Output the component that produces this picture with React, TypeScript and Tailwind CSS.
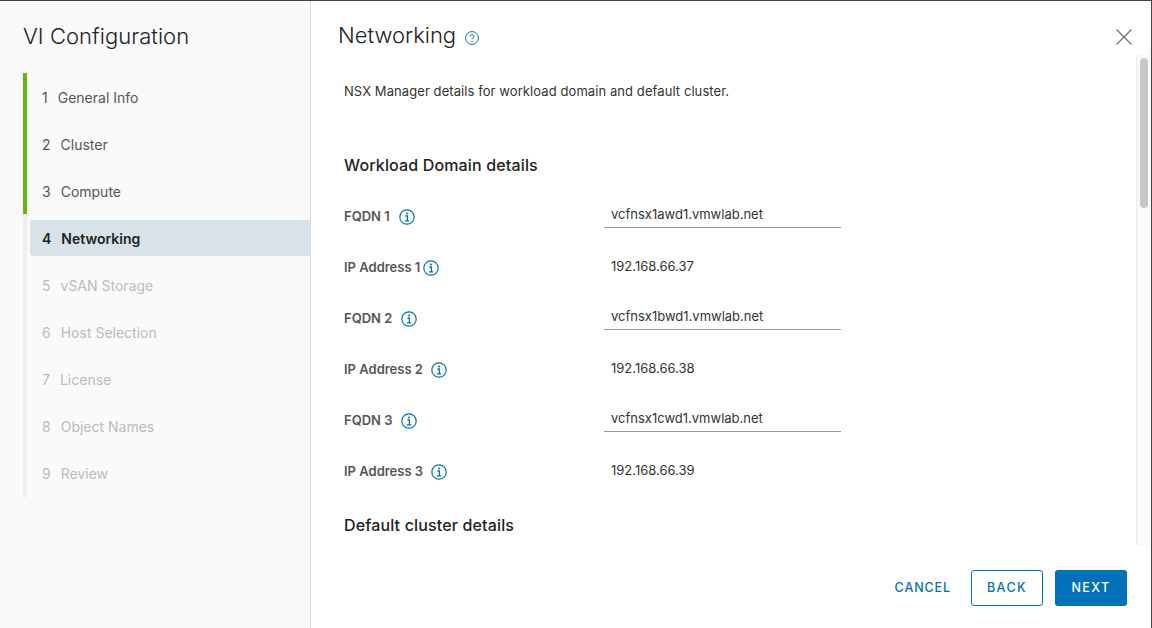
import { X } from "lucide-react";

const STEPS = [
  { n: 1, label: "General Info", state: "done" },
  { n: 2, label: "Cluster", state: "done" },
  { n: 3, label: "Compute", state: "done" },
  { n: 4, label: "Networking", state: "active" },
  { n: 5, label: "vSAN Storage", state: "todo" },
  { n: 6, label: "Host Selection", state: "todo" },
  { n: 7, label: "License", state: "todo" },
  { n: 8, label: "Object Names", state: "todo" },
  { n: 9, label: "Review", state: "todo" },
];

const ROWS = [
  { label: "FQDN 1", value: "vcfnsx1awd1.vmwlab.net", input: true, gap: "ml-[9px]" },
  { label: "IP Address 1", value: "192.168.66.37", input: false, gap: "ml-[3px]" },
  { label: "FQDN 2", value: "vcfnsx1bwd1.vmwlab.net", input: true, gap: "ml-[9px]" },
  { label: "IP Address 2", value: "192.168.66.38", input: false, gap: "ml-[8px]" },
  { label: "FQDN 3", value: "vcfnsx1cwd1.vmwlab.net", input: true, gap: "ml-[8px]" },
  { label: "IP Address 3", value: "192.168.66.39", input: false, gap: "ml-[8px]" },
];

function InfoIcon({ className }: { className?: string }) {
  return (
    <svg viewBox="0 0 16 16" className={`h-4 w-4 shrink-0 ${className ?? ""}`} fill="none">
      <circle cx="8" cy="8" r="7.2" stroke="#0072b8" strokeWidth="1.2" />
      <circle cx="8" cy="4.6" r="1" fill="#0072b8" />
      <path d="M6.4 7h2v4.6M6 11.8h4.2" stroke="#0072b8" strokeWidth="1.3" />
    </svg>
  );
}

function HelpIcon() {
  return (
    <svg viewBox="0 0 14 14" className="ml-[9px] mt-[4px] h-[14px] w-[14px]" fill="none">
      <circle cx="7" cy="7" r="6.4" stroke="#0072b8" strokeWidth="1" />
      <path d="M5 5.4c0-1.2.9-1.9 2-1.9s2 .7 2 1.8c0 1.5-2 1.5-2 3" stroke="#0072b8" strokeWidth="1" />
      <circle cx="7" cy="10.3" r=".7" fill="#0072b8" />
    </svg>
  );
}

export default function App() {
  return (
    <div className="flex h-[628px] w-[1152px] overflow-hidden border-r border-t border-[#444] bg-white font-['Inter',sans-serif] text-[13px]">
      {/* Steps */}
      <aside className="w-[311px] shrink-0 border-r border-[#dcdcdc] bg-[#fafafa] pl-[23px] pt-[18px]">
        <h1 className="text-[22px] font-light leading-[35px] text-[#222] tracking-[0.05px]">VI Configuration</h1>
        <ol className="mt-[19px]">
          {STEPS.map((s) => (
            <li
              key={s.n}
              className={`h-[47px] border-l-4 py-[6px] pl-[3px] last:h-[48px] ${
                s.state === "done" ? "border-[#60b515]" : "border-[#eeeeee]"
              }`}
            >
              <div
                className={`flex h-[36px] items-center rounded-l-[3px] pl-[12px] text-[14px] ${
                  s.state === "active"
                    ? "bg-[#d8e3e9] font-semibold text-[#222]"
                    : s.state === "done"
                      ? "text-[#565656]"
                      : "text-[#bcbcbc]"
                }`}
              >
                <span className="mr-[10px]">{s.n}</span>
                <span>{s.label}</span>
              </div>
            </li>
          ))}
        </ol>
      </aside>

      {/* Main panel */}
      <main className="flex min-w-0 flex-1 flex-col">
        <header className="flex h-[54px] shrink-0 items-start pl-[27px] pr-[13px] pt-[17px]">
          <h2 className="text-[22px] font-light leading-[35px] text-[#222]">Networking</h2>
          <div className="flex h-[35px] items-center">
            <HelpIcon />
          </div>
          <button className="ml-auto mt-[5px] text-[#6f6f6f]">
            <X className="h-[28px] w-[28px]" strokeWidth={1.1} />
          </button>
        </header>

        <div className="flex h-[491px] shrink-0">
          <div className="min-w-0 flex-1 overflow-hidden pl-[33px]">
            <p className="mt-[26px] leading-[20px] tracking-[0.08px] text-[#333]">
              NSX Manager details for workload domain and default cluster.
            </p>
            <h3 className="mt-[54px] text-[16px] font-medium leading-[20px] tracking-[0.15px] text-[#222]">
              Workload Domain details
            </h3>
            <div className="mt-[16px]">
              {ROWS.map((r) => (
                <div key={r.label} className="flex h-[51px] items-center">
                  <div className="flex w-[260px] items-center font-semibold text-[#565656]">
                    <span>{r.label}</span>
                    <InfoIcon className={r.gap} />
                  </div>
                  {r.input ? (
                    <div className="-mt-[3px] h-[25px] w-[237px] border-b border-[#9a9a9a] pl-[7px] leading-[22px] text-[#333]">
                      {r.value}
                    </div>
                  ) : (
                    <div className="-mt-[3px] h-[25px] w-[237px] pl-[7px] leading-[24px] text-[#333]">
                      {r.value}
                    </div>
                  )}
                </div>
              ))}
            </div>
            <h3 className="mt-[18px] text-[16px] font-medium leading-[20px] tracking-[0.15px] text-[#222]">
              Default cluster details
            </h3>
          </div>
          <div className="w-[15px] shrink-0 border-l border-[#ececec] bg-[#fafafa] pl-[3px] pt-[3px]">
            <div className="h-[150px] w-[8px] rounded-full bg-[#c8c8c8]" />
          </div>
        </div>

        <footer className="flex flex-1 items-start justify-end pr-[24px] pt-[24px] text-[12.5px] font-medium tracking-[1.4px]">
          <button className="mr-[20px] h-[36px] pt-[1px] tracking-[0.9px] text-[#0072b8]">CANCEL</button>
          <button className="mr-[12px] h-[36px] w-[72px] rounded-[3px] border border-[#0072b8] pt-[1px] text-[#0072b8]">BACK</button>
          <button className="h-[36px] w-[72px] rounded-[3px] bg-[#0072b8] pt-[1px] text-white">NEXT</button>
        </footer>
      </main>
    </div>
  );
}
